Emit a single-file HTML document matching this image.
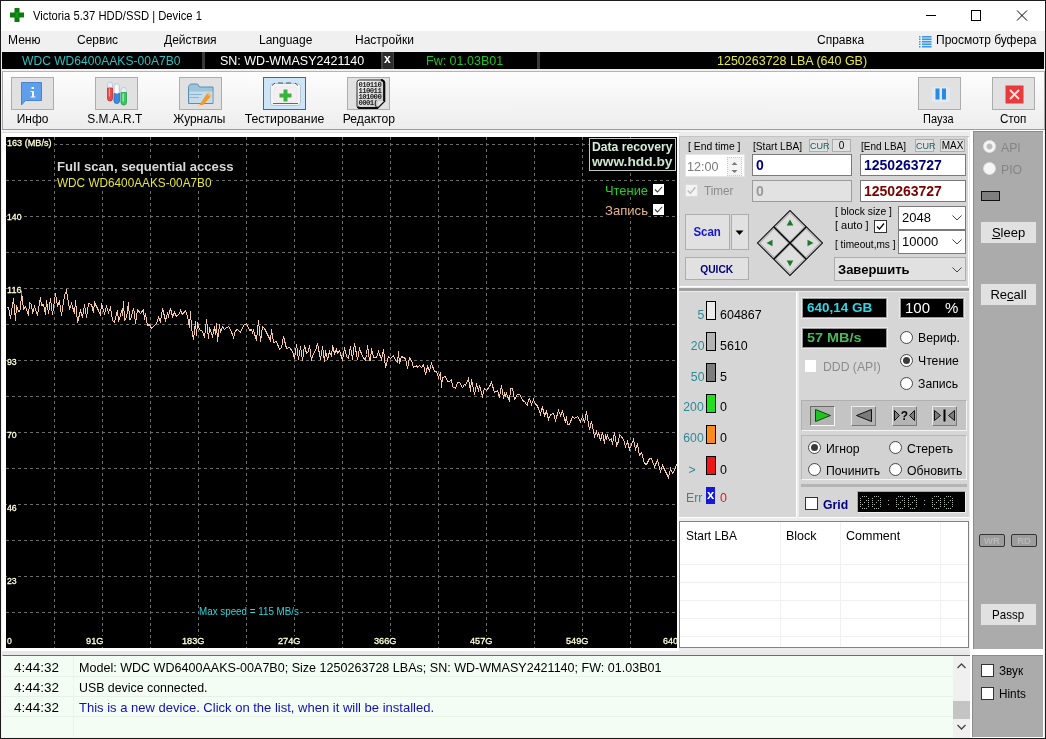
<!DOCTYPE html>
<html><head><meta charset="utf-8">
<style>
*{box-sizing:border-box;margin:0;padding:0}
html,body{width:1046px;height:739px;overflow:hidden;background:#f0f0f0}
body{font-family:"Liberation Sans",sans-serif;font-size:12px;color:#000;position:relative}
.a{position:absolute}
.t{position:absolute;white-space:nowrap;line-height:1}
#title{left:1px;top:1px;width:1044px;height:30px;background:#fff}
#menu{left:1px;top:31px;width:1044px;height:21px;background:#f0f0f0}
#menu .t{top:3px;font-size:12px;color:#000}
#dev{left:2px;top:52px;width:1042px;height:17px;background:#000}
#dev .t{top:3px;font-size:12.5px}
#tb{left:2px;top:71px;width:1043px;height:59px;background:linear-gradient(#fdfdfd,#ededed);border-bottom:1px solid #9c9c9c;border-left:1px solid #a8a8a8;border-top:1px solid #b4b4b4;border-right:1px solid #a8a8a8}
.tbtn{position:absolute;top:5px;width:43px;height:33px;background:#e1e1e1;border:1px solid #adadad}
.tlab{position:absolute;top:40px;font-size:12.5px;white-space:nowrap;text-align:center;line-height:14px}
#root{position:absolute;left:0;top:0;width:1046px;height:739px;will-change:transform}
</style></head><body><div id="root">

<!-- TITLE -->
<div class="a" id="title">
  <svg class="a" style="left:9px;top:7px" width="14" height="14" viewBox="0 0 14 14"><path d="M4.5 0h5v4.5H14v5H9.500V14h-5V9.500H0v-5h4.500z" fill="#0a7c0a"/><rect x="5.500" y="4" width="3" height="6" fill="#12951a"/></svg>
  <div class="t" style="transform:scaleX(0.9373);transform-origin:0 0;left:32px;top:9px;font-size:12px">Victoria 5.37 HDD/SSD | Device 1</div>
  <svg class="a" style="left:924px;top:8px" width="110" height="14" viewBox="0 0 110 14" fill="none" stroke="#000" stroke-width="1">
    <path d="M1 6.500h10"/><rect x="46.500" y="1.500" width="9" height="10"/><path d="M92 1.500l10 10M102 1.500l-10 10"/>
  </svg>
</div>

<!-- MENU -->
<div class="a" id="menu">
  <div class="t" style="left:7px">Меню</div>
  <div class="t" style="left:76px">Сервис</div>
  <div class="t" style="left:163px">Действия</div>
  <div class="t" style="left:258px">Language</div>
  <div class="t" style="left:354px">Настройки</div>
  <div class="t" style="left:816px">Справка</div>
  <svg class="a" style="left:918px;top:4px" width="13" height="14" viewBox="0 0 13 14"><rect x="2.500" y="1" width="10" height="11.500" fill="#cfe6f8"/><g stroke="#3f97e0" stroke-width="1.400"><path d="M0 1.700h1.500M3 1.700H12.500M0 4.200h1.500M3 4.200H12.500M0 6.700h1.500M3 6.700H12.500M0 9.200h1.500M3 9.200H12.500M0 11.700h1.500M3 11.700H12.500"/></g></svg>
  <div class="t" style="left:935px">Просмотр буфера</div>
</div>

<!-- DEVICE BAR -->
<div class="a" id="dev">
  <div class="t" style="transform:scaleX(0.9667);transform-origin:0 0;left:20px;color:#30bfc0">WDC WD6400AAKS-00A7B0</div>
  <div class="a" style="left:200px;top:0;width:3px;height:17px;background:#3a3a3a"></div>
  <div class="t" style="left:218px;color:#fff">SN: WD-WMASY2421140</div>
  <div class="a" style="left:379px;top:0;width:13px;height:17px;background:#2c2c2c;border-left:2px solid #444;border-right:1px solid #444"></div>
  <div class="t" style="left:382px;color:#fff;font-weight:bold;font-size:12px;top:1px">x</div>
  <div class="t" style="left:424px;color:#22c022">Fw: 01.03B01</div>
  <div class="a" style="left:535px;top:0;width:3px;height:17px;background:#3a3a3a"></div>
  <div class="t" style="left:715px;color:#e6e64a">1250263728 LBA (640 GB)</div>
</div>

<!-- TOOLBAR -->
<div class="a" id="tb">
  <div class="tbtn" style="left:8px"><svg width="41" height="31" viewBox="0 0 41 31"><path d="M9.500 4.500h20v18h-16l-4 4.500z" fill="#5e9eea" stroke="#4b84cc" stroke-width="1"/><path d="M19.500 9h2.500v2h-2.500zM18.500 13h3.500v5.500h1.500v1h-5v-1h1.500v-4.500h-1.500z" fill="#f4f8ff"/></svg></div><div class="tlab" style="left:0px;width:59px"><span style="transform:scaleX(0.9540);transform-origin:center 0;display:inline-block">Инфо</span></div>
  <div class="tbtn" style="left:92px"><svg width="41" height="31" viewBox="0 0 41 31">
<g stroke-width="0.800" transform="translate(-3.500,-0.500)">
<rect x="15" y="4.500" width="5" height="19" rx="2.500" fill="#e8eef8" stroke="#b8c4d8"/><path d="M15 10.500h5v10.500a2.500 2.500 0 0 1-5 0z" fill="#e84a4a" stroke="#c83030"/>
<rect x="21.500" y="6" width="5.500" height="20" rx="2.700" fill="#e8eef8" stroke="#b8c4d8"/><path d="M21.500 16h5.500v7.300a2.700 2.700 0 0 1-5.500 0z" fill="#3a8ae0" stroke="#2a6cc0"/><rect x="23" y="8" width="2.500" height="8" fill="#fff"/>
<rect x="28.500" y="10" width="5.500" height="17.500" rx="2.700" fill="#e8eef8" stroke="#b8c4d8"/><path d="M28.500 15h5.500v9.800a2.700 2.700 0 0 1-5.500 0z" fill="#38c860" stroke="#28a048"/>
<rect x="16.300" y="11" width="1.300" height="8" fill="#f8a0a0"/><rect x="30" y="16" width="1.300" height="8" fill="#a0f0b8"/>
</g></svg></div><div class="tlab" style="left:72px;width:80px"><span style="transform:scaleX(0.9539);transform-origin:center 0;display:inline-block">S.M.A.R.T</span></div>
  <div class="tbtn" style="left:176px"><svg width="41" height="31" viewBox="0 0 41 31">
<path d="M8.500 25.500v-17l2-2.500h7l2 3h13.500v16.500z" fill="#9cc4dc" stroke="#5c8eae" stroke-width="1"/>
<path d="M9.500 13.500h23v11.500h-23z" fill="#c4dcec"/><path d="M10 16.500h12M10 19.500h9" stroke="#8eb4cc" stroke-width="1"/>
<path d="M27 15.500l3.500 3.500-7.500 8h-3.500z" fill="#f29a2e"/><path d="M19.500 27l-1.500 1.500" stroke="#f7c9a0" stroke-width="1.500"/><path d="M27 15.500l1.300-1.300 3.500 3.500-1.300 1.300z" fill="#f6b96a"/>
</svg></div><div class="tlab" style="left:156px;width:80px"><span style="transform:scaleX(0.9522);transform-origin:center 0;display:inline-block">Журналы</span></div>
  <div class="tbtn" style="left:260px;background:#cde6f7;border-color:#2f6da6"><svg width="41" height="31" viewBox="0 0 41 31">
<rect x="6.500" y="5.500" width="30" height="22" rx="3" fill="#f4f4f6" stroke="#b8c4d0" stroke-width="1"/>
<path d="M8 7.500l3-2.500M34 7.500l-3-2.500M14 5h5M22 5h5" stroke="#555" stroke-width="1" fill="none"/>
<path d="M9 25.500h25" stroke="#667" stroke-width="1"/>
<rect x="10" y="9" width="23" height="15" rx="3" fill="#f8eef0" stroke="#e4ecf4" stroke-width="1"/>
<path d="M19.500 11.500h4v4h4v4h-4v4h-4v-4h-4v-4h4z" fill="#36b43c"/>
</svg></div><div class="tlab" style="left:232px;width:100px"><span style="transform:scaleX(0.9821);transform-origin:center 0;display:inline-block">Тестирование</span></div>
  <div class="tbtn" style="left:344px"><svg width="41" height="31" viewBox="0 0 41 31">
<defs><linearGradient id="pg" x1="0" y1="0" x2="1" y2="1"><stop offset="0" stop-color="#f6f6f6"/><stop offset="1" stop-color="#bdbdbd"/></linearGradient></defs>
<path d="M11.500 2h22.500a2.500 2.500 0 0 1 2.500 2.500v18.500l-7.500 7.500h-17.500a2.500 2.500 0 0 1-2.500-2.500v-23.500a2.500 2.500 0 0 1 2.500-2.500z" fill="url(#pg)" stroke="#2a2a2a" stroke-width="1"/>
<path d="M33 2.200a3 3 0 0 1 3.200 3v17.800l-7.200 7.200h-16.500a3 3 0 0 1-2.500-1.500" fill="none" stroke="#0c0c0c" stroke-width="2.200"/>
<path d="M29.500 29.500v-5a1.500 1.500 0 0 1 1.500-1.500h5z" fill="#e4e4e4"/>
<g font-family="Liberation Mono" font-weight="bold" font-size="7.300" fill="#222" letter-spacing="-0.600">
<text x="10.500" y="8.800">010110</text><text x="10.500" y="15">110011</text><text x="10.500" y="21.200">101000</text><text x="10.500" y="27.400">0001(</text></g>
</svg></div><div class="tlab" style="left:326px;width:80px"><span style="transform:scaleX(0.9700);transform-origin:center 0;display:inline-block">Редактор</span></div>
  <div class="tbtn" style="left:915px"><svg width="41" height="31" viewBox="0 0 41 31"><rect x="13" y="9" width="18" height="15" fill="#dfeaf4"/><rect x="16.500" y="10.500" width="4" height="11" fill="#2a8ae2"/><rect x="23" y="10.500" width="4" height="11" fill="#2a8ae2"/></svg></div><div class="tlab" style="left:895.500px;width:80px"><span style="transform:scaleX(0.8781);transform-origin:center 0;display:inline-block">Пауза</span></div>
  <div class="tbtn" style="left:989px"><svg width="41" height="31" viewBox="0 0 41 31"><rect x="12.500" y="7.500" width="18" height="18" fill="#e83a3a"/><path d="M17 12l9 9M26 12l-9 9" stroke="#fbe8e8" stroke-width="1.800" fill="none"/></svg></div><div class="tlab" style="left:970px;width:80px"><span style="transform:scaleX(0.9350);transform-origin:center 0;display:inline-block">Стоп</span></div>
</div>

<!-- MAIN AREA -->
<div class="a" style="left:2px;top:130px;width:1042px;height:2px;background:#f4f4f4"></div>
<div class="a" style="left:2px;top:132px;width:1042px;height:1px;background:#dcdcdc"></div><div class="a" style="left:2px;top:133px;width:1042px;height:4px;background:#ececec"></div>
<!-- chart frame (white) -->
<div class="a" style="left:2px;top:133px;width:677px;height:518px;background:#fff"></div>
<div class="a" id="chart" style="left:6px;top:137px;width:671px;height:511px;background:#000;overflow:hidden">
<svg class="a" style="left:0;top:0" width="671" height="511" viewBox="0 0 671 511" shape-rendering="crispEdges">
<g stroke="#6c6c6a" stroke-width="1" stroke-dasharray="3 3" fill="none">
<path d="M0 7.5H671"/>
<path d="M0 43.5H671"/>
<path d="M0 79.5H671"/>
<path d="M0 115.5H671"/>
<path d="M0 151.5H671"/>
<path d="M0 187.5H671"/>
<path d="M0 223.5H671"/>
<path d="M0 259.5H671"/>
<path d="M0 295.5H671"/>
<path d="M0 331.5H671"/>
<path d="M0 367.5H671"/>
<path d="M0 403.5H671"/>
<path d="M0 439.5H671"/>
<path d="M0 475.5H671"/>
<path d="M48.5 0V511"/>
<path d="M96.5 0V511"/>
<path d="M144.5 0V511"/>
<path d="M192.5 0V511"/>
<path d="M240.5 0V511"/>
<path d="M288.5 0V511"/>
<path d="M336.5 0V511"/>
<path d="M384.5 0V511"/>
<path d="M432.5 0V511"/>
<path d="M480.5 0V511"/>
<path d="M528.5 0V511"/>
<path d="M576.5 0V511"/>
<path d="M624.5 0V511"/>
</g>
<polyline points="0.5,170.5 2.5,170.5 4.5,181.5 7.5,161.5 9.5,183.5 10.5,168.5 12.5,174.5 14.5,173.5 15.5,154.5 17.5,172.5 19.5,169.5 22.5,178.5 23.5,165.5 25.5,167.5 26.5,176.5 28.5,169.5 31.5,178.5 33.5,166.5 34.5,160.5 35.5,168.5 37.5,167.5 39.5,177.5 40.5,163.5 42.5,176.5 44.5,161.5 46.5,177.5 49.5,156.5 51.5,168.5 53.5,164.5 55.5,178.5 58.5,158.5 60.5,153.5 63.5,172.5 65.5,166.5 68.5,176.5 69.5,163.5 71.5,185.5 74.5,173.5 76.5,180.5 78.5,167.5 80.5,180.5 82.5,166.5 85.5,167.5 87.5,175.5 88.5,165.5 90.5,169.5 92.5,173.5 94.5,178.5 95.5,166.5 98.5,176.5 100.5,169.5 102.5,175.5 104.5,170.5 106.5,183.5 108.5,185.5 111.5,173.5 112.5,184.5 114.5,178.5 115.5,173.5 116.5,178.5 117.5,164.5 118.5,183.5 120.5,180.5 122.5,165.5 123.5,182.5 124.5,182.5 127.5,171.5 128.5,176.5 129.5,186.5 131.5,172.5 134.5,176.5 137.5,172.5 138.5,182.5 139.5,176.5 141.5,188.5 143.5,187.5 145.5,191.5 148.5,188.5 150.5,186.5 152.5,180.5 154.5,184.5 156.5,171.5 159.5,183.5 161.5,176.5 162.5,179.5 164.5,171.5 166.5,179.5 168.5,175.5 170.5,179.5 173.5,176.5 174.5,173.5 176.5,177.5 179.5,173.5 181.5,179.5 183.5,190.5 184.5,174.5 185.5,190.5 187.5,202.5 189.5,184.5 190.5,198.5 191.5,185.5 193.5,192.5 196.5,194.5 198.5,200.5 200.5,182.5 202.5,201.5 203.5,190.5 206.5,199.5 208.5,189.5 209.5,197.5 210.5,186.5 211.5,204.5 213.5,187.5 214.5,195.5 216.5,189.5 218.5,192.5 219.5,191.5 222.5,189.5 224.5,192.5 227.5,200.5 229.5,193.5 231.5,192.5 234.5,195.5 237.5,188.5 240.5,186.5 243.5,193.5 245.5,192.5 246.5,195.5 247.5,193.5 250.5,203.5 252.5,183.5 254.5,204.5 256.5,189.5 258.5,191.5 260.5,195.5 262.5,199.5 264.5,203.5 265.5,192.5 267.5,205.5 270.5,204.5 273.5,212.5 275.5,210.5 277.5,199.5 280.5,211.5 283.5,210.5 286.5,214.5 288.5,221.5 290.5,207.5 292.5,222.5 294.5,209.5 296.5,223.5 298.5,208.5 300.5,216.5 302.5,214.5 303.5,208.5 305.5,223.5 306.5,218.5 308.5,215.5 310.5,210.5 311.5,206.5 314.5,222.5 316.5,209.5 318.5,224.5 319.5,213.5 321.5,222.5 323.5,214.5 325.5,219.5 326.5,208.5 328.5,216.5 330.5,212.5 331.5,216.5 333.5,213.5 336.5,223.5 338.5,210.5 340.5,219.5 342.5,221.5 344.5,209.5 346.5,222.5 348.5,206.5 351.5,222.5 353.5,211.5 356.5,219.5 359.5,223.5 360.5,217.5 361.5,208.5 363.5,223.5 364.5,223.5 365.5,211.5 367.5,220.5 370.5,220.5 372.5,214.5 375.5,222.5 377.5,212.5 379.5,230.5 382.5,219.5 384.5,221.5 387.5,218.5 389.5,223.5 391.5,225.5 392.5,214.5 393.5,226.5 395.5,219.5 397.5,220.5 399.5,221.5 401.5,231.5 403.5,220.5 405.5,223.5 407.5,230.5 410.5,228.5 411.5,230.5 413.5,228.5 415.5,230.5 417.5,227.5 419.5,237.5 421.5,229.5 423.5,233.5 425.5,226.5 428.5,234.5 430.5,234.5 432.5,240.5 434.5,235.5 435.5,250.5 436.5,240.5 439.5,239.5 441.5,244.5 443.5,244.5 445.5,242.5 446.5,249.5 449.5,251.5 451.5,245.5 453.5,245.5 456.5,250.5 458.5,247.5 459.5,248.5 462.5,241.5 464.5,254.5 465.5,242.5 468.5,257.5 470.5,247.5 472.5,253.5 473.5,248.5 476.5,259.5 478.5,251.5 480.5,253.5 483.5,249.5 485.5,245.5 488.5,255.5 491.5,253.5 493.5,260.5 495.5,248.5 497.5,261.5 498.5,256.5 499.5,258.5 500.5,256.5 503.5,264.5 504.5,251.5 506.5,251.5 508.5,262.5 511.5,257.5 513.5,257.5 515.5,260.5 516.5,263.5 518.5,264.5 520.5,267.5 521.5,268.5 522.5,262.5 523.5,261.5 525.5,267.5 527.5,262.5 529.5,267.5 530.5,267.5 532.5,271.5 534.5,277.5 535.5,272.5 536.5,270.5 538.5,278.5 540.5,274.5 542.5,282.5 544.5,277.5 547.5,276.5 549.5,283.5 552.5,273.5 554.5,278.5 556.5,274.5 559.5,285.5 560.5,279.5 561.5,287.5 563.5,287.5 566.5,279.5 568.5,281.5 571.5,279.5 574.5,284.5 576.5,279.5 578.5,285.5 580.5,274.5 583.5,292.5 585.5,284.5 588.5,299.5 590.5,294.5 591.5,299.5 592.5,295.5 594.5,303.5 596.5,295.5 598.5,306.5 599.5,297.5 600.5,301.5 601.5,298.5 603.5,303.5 605.5,301.5 606.5,307.5 608.5,295.5 610.5,308.5 612.5,304.5 613.5,297.5 614.5,298.5 617.5,302.5 619.5,309.5 621.5,304.5 623.5,312.5 625.5,307.5 627.5,302.5 629.5,312.5 631.5,306.5 633.5,318.5 635.5,315.5 638.5,326.5 640.5,327.5 643.5,321.5 645.5,321.5 646.5,324.5 648.5,329.5 651.5,323.5 654.5,334.5 656.5,328.5 659.5,334.5 662.5,340.5 664.5,331.5 666.5,336.5 668.5,333.5 670.5,327.5" fill="none" stroke="#f6c8a2" stroke-width="1"/>
</svg>
<style>
#chart .yl{position:absolute;left:1px;font-size:9.500px;color:#ffffd8;line-height:1;white-space:nowrap;background:#000;-webkit-text-stroke:0.300px #ffffd8}
#chart .xl{position:absolute;top:499px;font-size:9.500px;color:#ffffd8;line-height:1;white-space:nowrap;background:#000;-webkit-text-stroke:0.300px #ffffd8}
.cb{position:absolute;width:11px;height:11px;background:#fff}
</style>
<div class="yl" style="transform:scaleX(0.9576);transform-origin:0 0;top:1px">163 (MB/s)</div>
<div class="yl" style="transform:scaleX(0.9143);transform-origin:0 0;top:75px">140</div>
<div class="yl" style="transform:scaleX(0.9567);transform-origin:0 0;top:148px">116</div>
<div class="yl" style="transform:scaleX(0.9170);transform-origin:0 0;top:220px">93</div>
<div class="yl" style="transform:scaleX(0.9170);transform-origin:0 0;top:293px">70</div>
<div class="yl" style="transform:scaleX(0.9170);transform-origin:0 0;top:366px">46</div>
<div class="yl" style="transform:scaleX(0.9170);transform-origin:0 0;top:439px">23</div>
<div class="yl" style="transform:scaleX(0.9062);transform-origin:0 0;top:499px">0</div>
<div class="xl" style="transform:scaleX(0.9739);transform-origin:0 0;left:80px">91G</div>
<div class="xl" style="transform:scaleX(0.9677);transform-origin:0 0;left:176px">183G</div>
<div class="xl" style="transform:scaleX(0.9677);transform-origin:0 0;left:272px">274G</div>
<div class="xl" style="transform:scaleX(0.9677);transform-origin:0 0;left:368px">366G</div>
<div class="xl" style="transform:scaleX(0.9677);transform-origin:0 0;left:464px">457G</div>
<div class="xl" style="transform:scaleX(0.9677);transform-origin:0 0;left:560px">549G</div>
<div class="xl" style="transform:scaleX(0.9458);transform-origin:0 0;left:657px">640</div>
<div class="t" style="transform:scaleX(1.0094);transform-origin:0 0;left:51px;top:23px;font-size:13px;font-weight:bold;color:#d8d8d8;background:#000">Full scan, sequential access</div>
<div class="t" style="transform:scaleX(0.9815);transform-origin:0 0;left:51px;top:40px;font-size:12px;color:#e4e43c;background:#000">WDC WD6400AAKS-00A7B0</div>
<div class="a" style="left:583px;top:1px;width:87px;height:33px;border:1px solid #c4c8c4;background:#000"></div>
<div class="t" style="transform:scaleX(0.9734);transform-origin:0 0;left:586px;top:4px;font-size:12.500px;font-weight:bold;color:#d4ecd8">Data recovery</div>
<div class="t" style="transform:scaleX(1.0581);transform-origin:0 0;left:586px;top:18px;font-size:13px;font-weight:bold;color:#cce4cc">www.hdd.by</div>
<div class="t" style="transform:scaleX(0.9914);transform-origin:0 0;left:599px;top:47px;font-size:13px;color:#22d022;background:#000">Чтение</div>
<div class="t" style="transform:scaleX(1.0081);transform-origin:0 0;left:599px;top:67px;font-size:13px;color:#e8b48c;background:#000">Запись</div>
<div class="cb" style="left:647px;top:47px"><svg width="11" height="11" viewBox="0 0 11 11"><path d="M2 5.500l2.500 2.500L9 3" fill="none" stroke="#3a3a3a" stroke-width="1.100"/></svg></div>
<div class="cb" style="left:647px;top:67px"><svg width="11" height="11" viewBox="0 0 11 11"><path d="M2 5.500l2.500 2.500L9 3" fill="none" stroke="#3a3a3a" stroke-width="1.100"/></svg></div>
<div class="t" style="transform:scaleX(0.9354);transform-origin:0 0;left:193px;top:469px;font-size:10.500px;color:#34d4dc;background:#000">Max speed = 115 MB/s</div>

</div>
<style>
.pnl{position:absolute;background:#d6d6d6}
.lb{position:absolute;white-space:nowrap;line-height:1;font-size:11px;color:#000}
.inp{position:absolute;background:#fff;border:1px solid #7a7a7a;height:22px;font-weight:bold;font-size:14px;line-height:20px;padding-left:3px;white-space:nowrap}
.sbtn{position:absolute;border:1px solid #adadad;background:#e1e1e1;font-size:9px;line-height:9px;text-align:center;color:#000}
.btn{position:absolute;border:1px solid #adadad;background:#e1e1e1;text-align:center;white-space:nowrap}
.combo{position:absolute;background:#fff;border:1px solid #7a7a7a;font-size:13px;line-height:21px;padding-left:3px;white-space:nowrap}
.chev{position:absolute;right:3px;top:8px}
.rad{position:absolute;width:13px;height:13px;border-radius:50%;background:radial-gradient(circle at 60% 60%,#fff 55%,#d8d8d8 100%);border:1px solid #4a4a4a}
.rad.on::after{content:"";position:absolute;left:2px;top:2px;width:7px;height:7px;border-radius:50%;background:#3a3a3a}
.rl{position:absolute;white-space:nowrap;line-height:1;font-size:13px;color:#000;transform:scaleX(0.94);transform-origin:0 0}
.chk{position:absolute;width:13px;height:13px;background:#fff;border:1px solid #333}
.lcd{position:absolute;background:#000;border:1px solid #e8e8e8;outline:1px solid #9a9a9a;outline-offset:-2px;font-weight:bold;font-size:13.500px;line-height:20px;padding-left:5px;white-space:nowrap}
.sw{position:absolute;left:27px;width:10px;height:19px;border:1px solid #000;margin-top:1px}
.swl{position:absolute;right:92px;font-size:13px;color:#2b8a96;line-height:1;white-space:nowrap;transform:scaleX(0.94);transform-origin:100% 0}
.swn{position:absolute;left:41px;font-size:13px;color:#000;line-height:1;white-space:nowrap;transform:scaleX(0.96);transform-origin:0 0}
</style>
<!-- gap between chart and right panel -->
<div class="a" style="left:679px;top:132px;width:293px;height:522px;background:#ececec"></div>
<!-- top scan panel -->
<div class="pnl" style="left:679px;top:136px;width:290px;height:3px;border-top:1px solid #c4c4c4;border-left:1px solid #c4c4c4"></div><div class="pnl" id="p1" style="left:679px;top:137px;width:290px;height:150px;border:1px solid #c4c4c4;border-top:none;border-right-color:#fff;border-bottom-color:#fff">
  <div class="lb" style="transform:scaleX(0.9436);transform-origin:0 0;left:8px;top:4px">[ End time ]</div>
  <div class="lb" style="transform:scaleX(0.9210);transform-origin:0 0;left:73px;top:4px">[Start LBA]</div>
  <div class="sbtn" style="left:129px;top:2px;width:19px;height:13px;line-height:12px;color:#1c5858">CUR</div>
  <div class="sbtn" style="left:152px;top:2px;width:19px;height:13px;line-height:12px;font-size:10px">0</div>
  <div class="lb" style="transform:scaleX(0.9082);transform-origin:0 0;left:181px;top:4px">[End LBA]</div>
  <div class="sbtn" style="left:235px;top:2px;width:19px;height:13px;line-height:12px;color:#1c5858">CUR</div>
  <div class="sbtn" style="left:260px;top:2px;width:25px;height:13px;line-height:12px;font-size:10px">MAX</div>
  <!-- time spinner -->
  <div class="a" style="left:5px;top:17px;width:60px;height:23px;background:#fff;border:1px solid #e4e4e4"></div>
  <div class="t" style="transform:scaleX(0.9320);transform-origin:0 0;left:7px;top:23px;font-size:13.500px;color:#7a7a7a">12:00</div>
  <div class="a" style="left:47px;top:20px;width:15px;height:19px;border:1px dotted #c8c8c8;background:#f4f4f4"></div>
  <svg class="a" style="left:50px;top:24px" width="9" height="13" viewBox="0 0 9 13"><path d="M1.500 4L4.500 1l3 3zM1.500 9l3 3 3-3z" fill="#7a7a7a"/></svg>
  <div class="inp" style="left:72px;top:17px;width:100px;color:#00007c">0</div>
  <div class="inp" style="left:180px;top:17px;width:106px;color:#00007c">1250263727</div>
  <!-- row2 -->
  <div class="a" style="left:5px;top:47px;width:13px;height:13px;background:#f4f4f4;border:1px solid #dcdcdc"><svg class="a" style="left:0;top:0" width="11" height="11" viewBox="0 0 10 10"><path d="M1.500 5l2.500 2.500L8.500 2" fill="none" stroke="#bcbcbc" stroke-width="1.300"/></svg></div>
  <div class="t" style="transform:scaleX(0.8676);transform-origin:0 0;left:24px;top:47px;font-size:13.500px;color:#8c8c8c">Timer</div>
  <div class="inp" style="left:72px;top:43px;width:100px;background:#e2e2e2;border-color:#9c9c9c;color:#9a9a9a">0</div>
  <div class="inp" style="left:180px;top:43px;width:106px;color:#7c0000">1250263727</div>
  <!-- scan -->
  <div class="btn" style="left:5px;top:77px;width:45px;height:36px;line-height:34px;font-weight:bold;font-size:13.500px;color:#1414d8"><span style="transform:scaleX(0.8519);transform-origin:center 0;display:inline-block">Scan</span></div>
  <div class="btn" style="left:51px;top:77px;width:18px;height:36px"><svg class="a" style="left:3px;top:15px" width="9" height="6" viewBox="0 0 9 6"><path d="M0.500 0.500h8L4.500 5z" fill="#000"/></svg></div>
  <div class="btn" style="left:5px;top:120px;width:64px;height:23px;line-height:22px;font-weight:bold;font-size:11px;color:#00007c"><span style="transform:scaleX(0.9308);transform-origin:center 0;display:inline-block">QUICK</span></div>
  <!-- diamond -->
  <svg class="a" style="left:74px;top:70px" width="72" height="72" viewBox="-36 -36 72 72">
    <g transform="rotate(45)">
      <rect x="-23" y="-23" width="46" height="46" fill="#e4e4e4" stroke="#000" stroke-width="1"/>
      <rect x="-21.500" y="-21.500" width="20.500" height="20.500" fill="#dedede" stroke="#a8a8a8" stroke-width="1"/>
      <rect x="1" y="-21.500" width="20.500" height="20.500" fill="#dedede" stroke="#a8a8a8" stroke-width="1"/>
      <rect x="-21.500" y="1" width="20.500" height="20.500" fill="#dedede" stroke="#a8a8a8" stroke-width="1"/>
      <rect x="1" y="1" width="20.500" height="20.500" fill="#dedede" stroke="#a8a8a8" stroke-width="1"/>
      <path d="M-23 0H23M0 -23V23" stroke="#000" stroke-width="1.400"/>
    </g>
    <g fill="#1a7a28">
      <path d="M0 -23.500l3.300 6h-6.600z"/><path d="M0 23.500l3.300 -6h-6.600z"/><path d="M-23.500 0l6 -3.300v6.600z"/><path d="M23.500 0l-6 -3.300v6.600z"/>
    </g>
  </svg>
  <div class="lb" style="transform:scaleX(0.9417);transform-origin:0 0;left:155px;top:69px">[ block size ]</div>
  <div class="lb" style="left:155px;top:83px">[ auto ]</div>
  <div class="chk" style="left:194px;top:83px"><svg class="a" style="left:0;top:0" width="11" height="11" viewBox="0 0 11 11"><path d="M2 5.500l2.500 2.500L9 2.500" fill="none" stroke="#000" stroke-width="1.200"/></svg></div>
  <div class="lb" style="transform:scaleX(0.9162);transform-origin:0 0;left:155px;top:102px">[ timeout,ms ]</div>
  <div class="combo" style="left:218px;top:69px;width:68px;height:24px">2048<svg class="chev" width="10" height="6" viewBox="0 0 10 6"><path d="M0.500 0.500l4.500 4.500 4.500-4.500" fill="none" stroke="#444" stroke-width="1"/></svg></div>
  <div class="combo" style="left:218px;top:93px;width:68px;height:24px">10000<svg class="chev" width="10" height="6" viewBox="0 0 10 6"><path d="M0.500 0.500l4.500 4.500 4.500-4.500" fill="none" stroke="#444" stroke-width="1"/></svg></div>
  <div class="combo" style="left:154px;top:120px;width:132px;height:24px;background:#e1e1e1;border-color:#adadad;font-weight:bold;font-size:13px;line-height:23px">Завершить<svg class="chev" style="top:9px" width="10" height="6" viewBox="0 0 10 6"><path d="M0.500 0.500l4.500 4.500 4.500-4.500" fill="none" stroke="#444" stroke-width="1"/></svg></div>
</div>
<!-- separator -->
<div class="a" style="left:679px;top:288px;width:290px;height:3px;background:#a0a0a0"></div>
<!-- block counts panel -->
<div class="pnl" id="p2" style="left:679px;top:292px;width:118px;height:226px;border-right:1px solid #fff;border-bottom:1px solid #fff">
  <div class="swl" style="top:16px">5</div><div class="sw" style="top:8px;background:#ececec"></div><div class="swn" style="top:16px">604867</div>
  <div class="swl" style="top:47px">20</div><div class="sw" style="top:39px;background:#b4b4b4"></div><div class="swn" style="top:47px">5610</div>
  <div class="swl" style="top:78px">50</div><div class="sw" style="top:70px;background:#7c7c7c"></div><div class="swn" style="top:78px">5</div>
  <div class="swl" style="top:108px">200</div><div class="sw" style="top:101px;background:#1fe01f"></div><div class="swn" style="top:108px">0</div>
  <div class="swl" style="top:139px">600</div><div class="sw" style="top:132px;background:#ff8a1c"></div><div class="swn" style="top:139px">0</div>
  <div class="swl" style="top:171px;right:100px">&gt;</div><div class="sw" style="top:163px;background:#f01414"></div><div class="swn" style="top:171px">0</div>
  <div class="swl" style="top:199px;right:94px">Err</div><div class="sw" style="top:194px;height:17px;width:9px;background:#1418d8;border:none;color:#fff;font-weight:bold;font-size:13px;line-height:15px;text-align:center">x</div><div class="swn" style="top:199px;color:#e01818">0</div>
</div>
<!-- right sub panel -->
<div class="pnl" id="p3" style="left:799px;top:292px;width:170px;height:226px;border-bottom:1px solid #fff">
  <div class="lcd" style="left:2px;top:5px;width:87px;height:22px;color:#2fd6e4">640,14 GB</div>
  <div class="lcd" style="left:100px;top:5px;width:66px;height:22px;color:#fff;font-weight:normal;font-size:15px;word-spacing:0.800px">100&nbsp;&nbsp;&nbsp;%</div>
  <div class="lcd" style="left:2px;top:35px;width:87px;height:22px;color:#48b858"><span style="transform:scaleX(1.0680);transform-origin:0 0;display:inline-block">57 MB/s</span></div>
  <div class="rad" style="left:101px;top:39px"></div><div class="rl" style="left:119px;top:39px">Вериф.</div>
  <div class="rad on" style="left:101px;top:62px"></div><div class="rl" style="left:119px;top:62px">Чтение</div>
  <div class="rad" style="left:101px;top:85px"></div><div class="rl" style="left:119px;top:85px">Запись</div>
  <div class="a" style="left:6px;top:68px;width:11px;height:12px;background:#fff"></div>
  <div class="rl" style="left:24px;top:68px;color:#8c8c8c">DDD (API)</div>
  <!-- playback strip -->
  <div class="a" style="left:2px;top:108px;width:166px;height:31px;background:#c4c4c4;border:1px solid #b0b0b0;border-right-color:#f4f4f4;border-bottom-color:#f4f4f4"></div>
  <div class="a pb" style="left:11px;top:114px;width:25px;height:20px;background:#b4b4b4;border:1px solid #6c6c6c;border-right-color:#f8f8f8;border-bottom-color:#f8f8f8"><svg width="23" height="17" viewBox="0 0 23 17"><path d="M4.500 2.500v12l15-6z" fill="#22c422" stroke="#0a4a0a" stroke-width="1"/></svg></div>
  <div class="a pb" style="left:52px;top:114px;width:25px;height:20px;background:#b4b4b4;border:1px solid #ececec;border-right-color:#7a7a7a;border-bottom-color:#7a7a7a"><svg width="23" height="17" viewBox="1 1 23 17"><path d="M20.500 3.500v12l-15-6z" fill="#7c7c7c" stroke="#111" stroke-width="1"/></svg></div>
  <div class="a pb" style="left:93px;top:114px;width:25px;height:20px;background:#b4b4b4;border:1px solid #ececec;border-right-color:#7a7a7a;border-bottom-color:#7a7a7a"><svg width="23" height="17" viewBox="1 1 23 17"><path d="M2.500 4.500v10l5-5zM22.500 4.500v10l-5-5z" fill="#7c7c7c" stroke="#111" stroke-width="1"/><text x="12.500" y="14" font-family="Liberation Sans" font-weight="bold" font-size="12" text-anchor="middle" fill="#000">?</text></svg></div>
  <div class="a pb" style="left:133px;top:114px;width:25px;height:20px;background:#b4b4b4;border:1px solid #ececec;border-right-color:#7a7a7a;border-bottom-color:#7a7a7a"><svg width="23" height="17" viewBox="1 1 23 17"><path d="M2.500 4.500v10l6-5zM22.500 4.500v10l-6-5z" fill="#7c7c7c" stroke="#111" stroke-width="1"/><path d="M12.500 3.500v12" stroke="#000" stroke-width="2"/></svg></div>
  <!-- radio group -->
  <div class="a" style="left:2px;top:143px;width:166px;height:45px;background:#d2d2d2;border:1px solid #b8b8b8;border-right-color:#f4f4f4;border-bottom-color:#f4f4f4"></div>
  <div class="rad on" style="left:9px;top:149px"></div><div class="rl" style="left:27px;top:150px">Игнор</div>
  <div class="rad" style="left:90px;top:149px"></div><div class="rl" style="left:108px;top:150px">Стереть</div>
  <div class="rad" style="left:9px;top:171px"></div><div class="rl" style="left:27px;top:172px">Починить</div>
  <div class="rad" style="left:90px;top:171px"></div><div class="rl" style="left:108px;top:172px">Обновить</div>
  <div class="a" style="left:2px;top:192px;width:166px;height:3px;background:#b4b4b4"></div>
  <div class="chk" style="left:6px;top:205px"></div>
  <div class="rl" style="left:24px;top:206px;font-weight:bold;color:#00007c">Grid</div>
  <div class="a" style="left:58px;top:199px;width:109px;height:22px;background:#000;border:1px solid #a8a8a8;border-right-color:#f0f0f0;border-bottom-color:#f0f0f0"></div>
  <svg class="a" style="left:60px;top:199px" width="107" height="22" viewBox="0 0 107 22" shape-rendering="crispEdges"><path d="M3 5h1v1h-1zM5 5h1v1h-1zM7 5h1v1h-1zM1 7h1v1h-1zM9 7h1v1h-1zM1 9h1v1h-1zM7 9h1v1h-1zM9 9h1v1h-1zM1 11h1v1h-1zM5 11h1v1h-1zM9 11h1v1h-1zM1 13h1v1h-1zM3 13h1v1h-1zM9 13h1v1h-1zM1 15h1v1h-1zM9 15h1v1h-1zM3 17h1v1h-1zM5 17h1v1h-1zM7 17h1v1h-1zM15 5h1v1h-1zM17 5h1v1h-1zM19 5h1v1h-1zM13 7h1v1h-1zM21 7h1v1h-1zM13 9h1v1h-1zM19 9h1v1h-1zM21 9h1v1h-1zM13 11h1v1h-1zM17 11h1v1h-1zM21 11h1v1h-1zM13 13h1v1h-1zM15 13h1v1h-1zM21 13h1v1h-1zM13 15h1v1h-1zM21 15h1v1h-1zM15 17h1v1h-1zM17 17h1v1h-1zM19 17h1v1h-1zM39 5h1v1h-1zM41 5h1v1h-1zM43 5h1v1h-1zM37 7h1v1h-1zM45 7h1v1h-1zM37 9h1v1h-1zM43 9h1v1h-1zM45 9h1v1h-1zM37 11h1v1h-1zM41 11h1v1h-1zM45 11h1v1h-1zM37 13h1v1h-1zM39 13h1v1h-1zM45 13h1v1h-1zM37 15h1v1h-1zM45 15h1v1h-1zM39 17h1v1h-1zM41 17h1v1h-1zM43 17h1v1h-1zM51 5h1v1h-1zM53 5h1v1h-1zM55 5h1v1h-1zM49 7h1v1h-1zM57 7h1v1h-1zM49 9h1v1h-1zM55 9h1v1h-1zM57 9h1v1h-1zM49 11h1v1h-1zM53 11h1v1h-1zM57 11h1v1h-1zM49 13h1v1h-1zM51 13h1v1h-1zM57 13h1v1h-1zM49 15h1v1h-1zM57 15h1v1h-1zM51 17h1v1h-1zM53 17h1v1h-1zM55 17h1v1h-1zM75 5h1v1h-1zM77 5h1v1h-1zM79 5h1v1h-1zM73 7h1v1h-1zM81 7h1v1h-1zM73 9h1v1h-1zM79 9h1v1h-1zM81 9h1v1h-1zM73 11h1v1h-1zM77 11h1v1h-1zM81 11h1v1h-1zM73 13h1v1h-1zM75 13h1v1h-1zM81 13h1v1h-1zM73 15h1v1h-1zM81 15h1v1h-1zM75 17h1v1h-1zM77 17h1v1h-1zM79 17h1v1h-1zM87 5h1v1h-1zM89 5h1v1h-1zM91 5h1v1h-1zM85 7h1v1h-1zM93 7h1v1h-1zM85 9h1v1h-1zM91 9h1v1h-1zM93 9h1v1h-1zM85 11h1v1h-1zM89 11h1v1h-1zM93 11h1v1h-1zM85 13h1v1h-1zM87 13h1v1h-1zM93 13h1v1h-1zM85 15h1v1h-1zM93 15h1v1h-1zM87 17h1v1h-1zM89 17h1v1h-1zM91 17h1v1h-1zM29 9h1v1h-1zM29 13h1v1h-1zM65 9h1v1h-1zM65 13h1v1h-1z" fill="#b0b89c"/></svg>
</div>
<!-- table -->
<div class="a" id="tbl" style="left:679px;top:521px;width:290px;height:127px;background:#fff;border:1px solid #828282">
  <div class="t" style="transform:scaleX(0.9533);transform-origin:0 0;left:6px;top:8px;font-size:12.500px">Start LBA</div>
  <div class="t" style="left:106px;top:8px;font-size:12.500px">Block</div>
  <div class="t" style="left:166px;top:8px;font-size:12.500px">Comment</div>
  <div class="a" style="left:100px;top:0;width:1px;height:125px;background:#f0f0f0"></div>
  <div class="a" style="left:160px;top:0;width:1px;height:125px;background:#f0f0f0"></div>
  <div class="a" style="left:260px;top:0;width:1px;height:125px;background:#f0f0f0"></div>
  <div class="a" style="left:0;top:42px;width:288px;height:1px;background:#f0f0f0"></div>
  <div class="a" style="left:0;top:60px;width:288px;height:1px;background:#f0f0f0"></div>
  <div class="a" style="left:0;top:78px;width:288px;height:1px;background:#f0f0f0"></div>
  <div class="a" style="left:0;top:96px;width:288px;height:1px;background:#f0f0f0"></div>
  <div class="a" style="left:0;top:114px;width:288px;height:1px;background:#f0f0f0"></div>
</div>
<!-- far right panel -->
<div class="a" style="left:970px;top:130px;width:74px;height:526px;background:#fff"></div>
<div class="a" id="fr" style="left:973px;top:131px;width:70px;height:518px;background:#ababab;border-left:1px solid #8c8c8c;border-top:1px solid #8c8c8c">
  <div class="rad" style="left:9px;top:8px;border-color:#e4e4e4;background:radial-gradient(circle,#bdbdbd 0,#bdbdbd 2.500px,#f6f6f6 3.500px)"></div><div class="rl" style="left:27px;top:9px;color:#858585">API</div>
  <div class="rad" style="left:9px;top:30px;border-color:#dcdcdc;background:#f6f6f6"></div><div class="rl" style="left:27px;top:31px;color:#858585">PIO</div>
  <div class="a" style="left:7px;top:59px;width:19px;height:10px;background:#7e7e7e;border:1px solid #111"></div>
  <div class="btn" style="left:6px;top:89px;width:57px;height:23px;line-height:21px;font-size:13px"><u>S</u>leep</div>
  <div class="btn" style="left:6px;top:151px;width:57px;height:23px;line-height:21px;font-size:13px">Re<u>c</u>all</div>
  <div class="a" style="left:5px;top:402px;width:26px;height:13px;border:1px solid #333;border-radius:2px;background:#9c9c9c;color:#b8b8b8;font-size:9.500px;font-weight:bold;line-height:11px;text-align:center">WR</div>
  <div class="a" style="left:37px;top:402px;width:26px;height:13px;border:1px solid #333;border-radius:2px;background:#9c9c9c;color:#b8b8b8;font-size:9.500px;font-weight:bold;line-height:11px;text-align:center">RD</div>
  <div class="btn" style="left:6px;top:471px;width:57px;height:23px;line-height:21px;font-size:13px"><span style="transform:scaleX(0.8854);transform-origin:center 0;display:inline-block">Passp</span></div>
</div>

<!-- log -->
<div class="a" style="left:2px;top:651px;width:1042px;height:4px;background:#e9e9e9"></div>
<div class="a" id="log" style="left:2px;top:655px;width:968px;height:82px;background:#f3fdf4;border-top:1px solid #6c6c6c;border-left:1px solid #fafafa">
  <div class="a" style="left:0;top:20px;width:950px;height:1px;background:#e9f1e9"></div>
  <div class="a" style="left:0;top:40px;width:950px;height:1px;background:#e9f1e9"></div>
  <div class="a" style="left:0;top:60px;width:950px;height:1px;background:#e9f1e9"></div>
  <div class="a" style="left:70px;top:0;width:1px;height:81px;background:#ecf4ec"></div>
  <div class="t" style="transform:scaleX(1.0375);transform-origin:0 0;left:11px;top:5px;font-size:13px">4:44:32</div>
  <div class="t" style="transform:scaleX(0.9651);transform-origin:0 0;left:76px;top:5px;font-size:13px">Model: WDC WD6400AAKS-00A7B0; Size 1250263728 LBAs; SN: WD-WMASY2421140; FW: 01.03B01</div>
  <div class="t" style="transform:scaleX(1.0375);transform-origin:0 0;left:11px;top:25px;font-size:13px">4:44:32</div>
  <div class="t" style="transform:scaleX(0.9509);transform-origin:0 0;left:76px;top:25px;font-size:13px">USB device connected.</div>
  <div class="t" style="transform:scaleX(1.0375);transform-origin:0 0;left:11px;top:45px;font-size:13px">4:44:32</div>
  <div class="t" style="transform:scaleX(1.0007);transform-origin:0 0;left:76px;top:45px;font-size:13px;color:#1010b8">This is a new device. Click on the list, when it will be installed.</div>
  <!-- scrollbar -->
  <div class="a" style="left:950px;top:0;width:17px;height:81px;background:#f0f0f0"></div>
  <svg class="a" style="left:954px;top:7px" width="9" height="6" viewBox="0 0 9 6"><path d="M0.500 5l4-4 4 4" fill="none" stroke="#444" stroke-width="1.300"/></svg>
  <svg class="a" style="left:954px;top:68px" width="9" height="6" viewBox="0 0 9 6"><path d="M0.500 1l4 4 4-4" fill="none" stroke="#444" stroke-width="1.300"/></svg>
  <div class="a" style="left:950px;top:45px;width:17px;height:18px;background:#c4c4c4"></div>
</div>
<!-- bottom-right panel -->
<div class="a" style="left:970px;top:651px;width:74px;height:87px;background:#fff"></div>
<div class="a" id="br" style="left:972px;top:655px;width:71px;height:82px;background:#ababab;border-left:1px solid #8c8c8c;border-top:1px solid #8c8c8c">
  <div class="chk" style="left:8px;top:8px"></div><div class="rl" style="left:26px;top:9px;font-size:12.500px">Звук</div>
  <div class="chk" style="left:8px;top:31px"></div><div class="rl" style="left:26px;top:32px;font-size:12.500px">Hints</div>
</div>

<div class="a" style="left:0;top:0;width:1046px;height:739px;border:1px solid #1c1c1c"></div>
</div></body></html>
